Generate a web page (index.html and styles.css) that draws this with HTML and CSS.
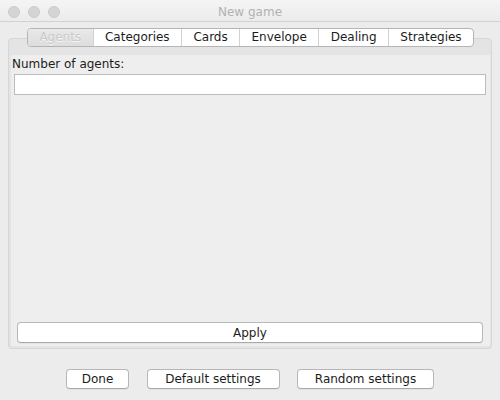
FILE: index.html
```html
<!DOCTYPE html>
<html>
<head>
<meta charset="utf-8">
<link rel="stylesheet" href="styles.css">
</head>
<body>
<div class="window">
  <div class="titlebar">
    <div class="lights">
      <span class="light"></span><span class="light"></span><span class="light"></span>
    </div>
    <div class="title">New game</div>
    <div></div>
  </div>
  <div class="content">
    <div class="tabs">
      <div class="tab selected">Agents</div>
      <div class="tab">Categories</div>
      <div class="tab">Cards</div>
      <div class="tab">Envelope</div>
      <div class="tab">Dealing</div>
      <div class="tab">Strategies</div>
    </div>
    <div class="panel">
      <div class="inner">
        <label class="label">Number of agents:</label>
        <input class="field" type="text">
        <div class="spacer"></div>
        <button class="btn apply">Apply</button>
      </div>
    </div>
  </div>
  <div class="actions">
    <button class="btn done">Done</button>
    <button class="btn default">Default settings</button>
    <button class="btn random">Random settings</button>
  </div>
</div>
</body>
</html>
```
FILE: styles.css
```css
* { box-sizing: border-box; }
html, body { margin: 0; padding: 0; }
body {
  background: #ececec;
  font-family: "DejaVu Sans", "Liberation Sans", sans-serif;
  font-size: 12px;
  color: #1c1c1c;
}
.window {
  width: 500px;
  height: 400px;
  display: flex;
  flex-direction: column;
  background: #ececec;
}
.titlebar {
  height: 22px;
  flex: none;
  display: grid;
  grid-template-columns: 1fr auto 1fr;
  background: linear-gradient(#f4f4f4, #ececec);
  border-bottom: 1px solid #d2d2d2;
}
.lights {
  display: flex;
  gap: 8px;
  padding: 6px 0 0 8px;
}
.light {
  width: 12px;
  height: 12px;
  border-radius: 50%;
  background: #d4d4d4;
  border: 1px solid #cbcbcb;
}
.title {
  color: #b2b2b2;
  line-height: 20px;
  padding-top: 2px;
}
.content {
  flex: 1;
  display: flex;
  flex-direction: column;
  padding: 6px 8px 0 8px;
}
.tabs {
  align-self: center;
  display: flex;
  height: 19px;
  border: 1px solid #b5b5b5;
  border-radius: 4px;
  background: #fff;
  overflow: hidden;
  position: relative;
  z-index: 1;
  margin-left: 1px;
}
.tab {
  padding: 0 11.4px;
  line-height: 17px;
  border-left: 1px solid #d2d2d2;
  color: #1c1c1c;
  white-space: nowrap;
}
.tab:first-child { border-left: none; }
.tab.selected {
  background: linear-gradient(#e9e9e9, #dddddd);
  color: #c9c9c9;
  text-shadow: 0 1px 0 #f8f8f8;
}
.panel {
  flex: 1;
  margin-top: -9px;
  border: 1px solid #d6d6d6;
  border-radius: 4px;
  background: #e4e4e4;
  padding: 16px 1px 2px 2px;
  display: flex;
}
.inner {
  flex: 1;
  background: #eeeeee;
  display: flex;
  flex-direction: column;
  padding: 0 4px 3px 1px;
}
.label {
  line-height: 16px;
  padding-top: 1px;
  color: #1c1c1c;
}
.field {
  margin: 2px 0 0 2px;
  height: 21px;
  border: 1px solid #bcbcbc;
  background: #fff;
  outline: none;
  padding: 0;
}
.spacer { flex: 1; }
.btn {
  font-family: inherit;
  font-size: 12px;
  color: #1c1c1c;
  background: #fff;
  border: 1px solid #b7b7b7;
  border-bottom-color: #a9a9a9;
  border-radius: 4px;
  padding: 0;
  box-shadow: 0 1px 0 rgba(0,0,0,0.04);
}
.apply {
  height: 21px;
  margin: 0 3px 0 5px;
}
.actions {
  flex: none;
  height: 51px;
  padding-top: 20px;
  display: flex;
  justify-content: center;
  align-items: flex-start;
  gap: 17.5px;
}
.actions .btn { height: 20px; }
.done { width: 63px; }
.default { width: 133px; }
.random { width: 137px; }
```
